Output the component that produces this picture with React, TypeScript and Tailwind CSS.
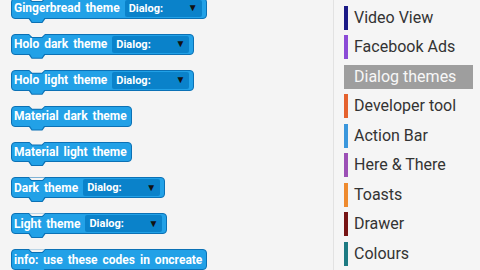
import React from 'react'

interface BlockProps {
  label: string
  dropdown?: boolean
}

const blocks: BlockProps[] = [
  { label: 'Gingerbread theme', dropdown: true },
  { label: 'Holo dark theme', dropdown: true },
  { label: 'Holo light theme', dropdown: true },
  { label: 'Material dark theme' },
  { label: 'Material light theme' },
  { label: 'Dark theme', dropdown: true },
  { label: 'Light theme', dropdown: true },
  { label: 'info: use these codes in oncreate' },
]

const menu = [
  { label: 'Video View', color: 'bg-[#1b1a86]' },
  { label: 'Facebook Ads', color: 'bg-[#8b4bd6]' },
  { label: 'Dialog themes', color: '', active: true },
  { label: 'Developer tool', color: 'bg-[#e5622e]' },
  { label: 'Action Bar', color: 'bg-[#3b97dc]' },
  { label: 'Here & There', color: 'bg-[#9c50b6]' },
  { label: 'Toasts', color: 'bg-[#ee8a2e]' },
  { label: 'Drawer', color: 'bg-[#761414]' },
  { label: 'Colours', color: 'bg-[#1d7a82]' },
]

function Block({ label, dropdown }: BlockProps) {
  return (
    <div className="relative flex h-[21px] w-fit items-center rounded-[4px] border border-[#0b71b5] bg-[#22a1e7] pl-[2px] pr-[4px]">
      {/* top notch */}
      <span className="absolute left-[16px] top-[-1px] h-[4px] w-[18px] bg-[#0b71b5] [clip-path:polygon(0_0,100%_0,80%_100%,20%_100%)]" />
      <span className="absolute left-[17px] top-[-1px] h-[3px] w-[16px] bg-[#f4f4f4] [clip-path:polygon(0_0,100%_0,80%_100%,20%_100%)]" />
      <span className="whitespace-nowrap text-[12px] font-bold leading-none text-white [word-spacing:2px]">{label}</span>
      {dropdown && (
        <div className="ml-[5px] flex h-[17px] w-[77px] items-center justify-between rounded-[2px] bg-[#0a82ca] pl-[4px] pr-[4px]">
          <span className="text-[11px] font-bold leading-none text-white">Dialog:</span>
          <span className="text-[10px] leading-none text-[#111]">▼</span>
        </div>
      )}
      {/* bottom tab */}
      <span className="absolute bottom-[-5px] left-[16px] h-[5px] w-[18px] bg-[#0b71b5] [clip-path:polygon(0_0,100%_0,80%_100%,20%_100%)]" />
      <span className="absolute bottom-[-4px] left-[17px] h-[5px] w-[16px] bg-[#22a1e7] [clip-path:polygon(0_0,100%_0,80%_100%,20%_100%)]" />
    </div>
  )
}

export default function App() {
  return (
    <div className="flex h-[270px] w-[480px] overflow-hidden bg-[#f4f4f4] font-['Roboto',sans-serif]">
      {/* Blocks canvas */}
      <div className="flex w-[333px] flex-col gap-[15px] pl-[11px] -mt-[2px]">
        {blocks.map(b => (
          <Block key={b.label} {...b} />
        ))}
      </div>

      {/* Category list */}
      <div className="flex flex-1 flex-col border-l border-[#e2e2e2] bg-[#f5f5f5] pl-[10px] pr-[7px] pt-[3px]">
        {menu.map(m => (
          <div key={m.label} className="flex h-[29.5px] items-center">
            <div className={`flex h-[24px] flex-1 items-center ${m.active ? 'bg-[#9e9e9e]' : ''}`}>
              <span className={`h-[24px] w-[4px] ${m.color}`} />
              <span className={`ml-[6px] text-[16px] leading-none ${m.active ? 'text-[#f7f7f7]' : 'text-[#333]'}`}>
                {m.label}
              </span>
            </div>
          </div>
        ))}
      </div>
    </div>
  )
}
